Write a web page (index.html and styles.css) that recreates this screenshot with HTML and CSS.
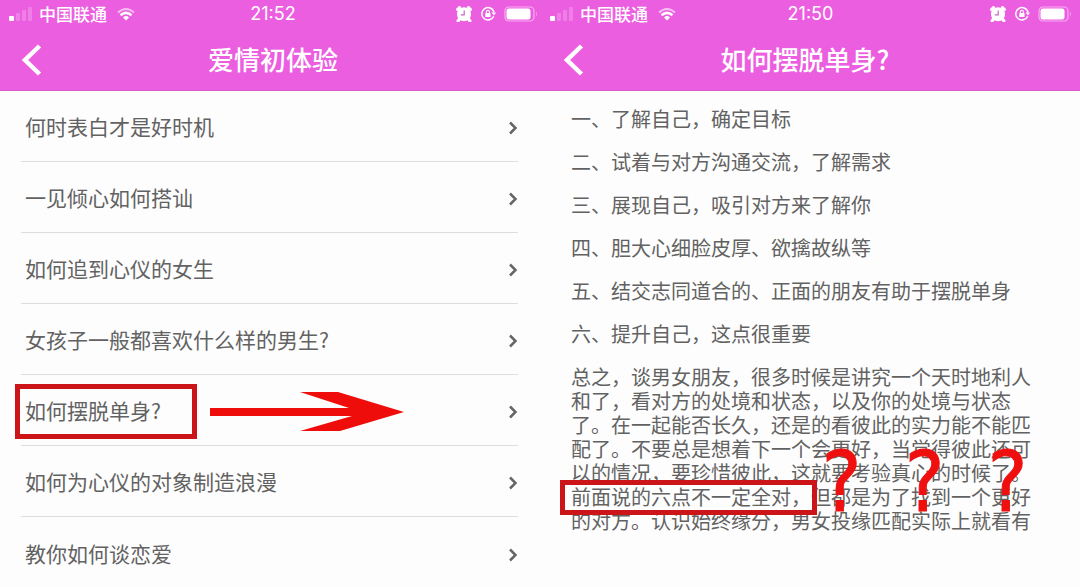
FILE: index.html
```html
<!DOCTYPE html>
<html lang="zh-CN">
<head>
<meta charset="utf-8">
<meta name="viewport" content="width=device-width, initial-scale=1">
<title>爱情初体验</title>
<link rel="stylesheet" href="styles.css">
</head>
<body>
<svg class="sprite" aria-hidden="true">
  <symbol id="signal" viewBox="0 0 26 16">
    <rect x="1" y="10" width="5" height="5" rx="1" fill="#fff"/>
    <g fill="#fff" opacity=".2"><rect x="8" y="7" width="4" height="8" rx="1"/><rect x="14" y="4" width="4" height="11" rx="1"/><rect x="20" y="1" width="4" height="14" rx="1"/></g>
  </symbol>
  <symbol id="wifi" viewBox="0 0 18 14">
    <path d="M1 5.500Q9-1.500 17 5.500" fill="none" stroke="#fff" stroke-width="2" opacity=".6"/>
    <path d="M3.500 8.200Q9 3.500 14.500 8.200" fill="none" stroke="#fff" stroke-width="2.500"/>
    <path d="M6 10.500Q9 7.600 12 10.500L9 13.500Z" fill="#fff"/>
  </symbol>
  <symbol id="alarm" viewBox="0 0 16 16">
    <path d="M1.500 3.500 3.500 1.500M12.500 1.500l2 2M3.500 13 2 15M12.500 13l1.500 2" stroke="#fff" stroke-width="3" stroke-linecap="round"/>
    <circle cx="8" cy="8.300" r="7" fill="#fff"/>
    <path d="M8.200 4.500v4.300H4.800" fill="none" stroke="#c963c2" stroke-width="1.200"/>
  </symbol>
  <symbol id="lock" viewBox="0 0 16 16">
    <path d="M13.700 10.200A6.200 6.200 0 1 1 14 6.300" fill="none" stroke="#fff" stroke-width="1.500"/>
    <path d="M11.500 6.500H16L14 9.500Z" fill="#fff"/>
    <rect x="5.300" y="7" width="5.200" height="4" rx=".5" fill="#fff"/>
    <path d="M6.400 7V5.900a1.500 1.500 0 0 1 3 0V7" fill="none" stroke="#fff" stroke-width="1.100"/>
  </symbol>
  <symbol id="battery" viewBox="0 0 34 16">
    <rect x="1" y="1" width="29" height="14" rx="4" fill="none" stroke="#fff" stroke-width="1.200" opacity=".5"/>
    <rect x="2.500" y="2.500" width="24" height="11" rx="2.500" fill="#fff"/>
    <path d="M32 5.500q2 2.500 0 5z" fill="#fff" opacity=".4"/>
  </symbol>
  <symbol id="back" viewBox="0 0 22 32"><path d="M19.500 2 5 16l14.500 14" fill="none" stroke="#fff" stroke-width="4.500"/></symbol>
  <symbol id="next" viewBox="0 0 10 14"><path d="M2 1.500 7.500 7 2 12.500" fill="none" stroke="#666" stroke-width="2.500"/></symbol>
</svg>
<main class="screens">
  <section class="screen screen-list">
    <header class="header">
      <div class="status">
        <div class="carrier"><svg class="i-signal"><use href="#signal"/></svg><span>中国联通</span><svg class="i-wifi"><use href="#wifi"/></svg></div>
        <time>21:52</time>
        <div class="indicators"><svg class="i-small"><use href="#alarm"/></svg><svg class="i-small"><use href="#lock"/></svg><svg class="i-battery"><use href="#battery"/></svg></div>
      </div>
      <div class="bar">
        <button class="back" type="button" aria-label="返回"><svg class="i-back"><use href="#back"/></svg></button>
        <h1>爱情初体验</h1>
      </div>
    </header>
    <nav class="topics">
      <a href="#"><span>何时表白才是好时机</span><svg class="i-next"><use href="#next"/></svg></a>
      <a href="#"><span>一见倾心如何搭讪</span><svg class="i-next"><use href="#next"/></svg></a>
      <a href="#"><span>如何追到心仪的女生</span><svg class="i-next"><use href="#next"/></svg></a>
      <a href="#"><span>女孩子一般都喜欢什么样的男生?</span><svg class="i-next"><use href="#next"/></svg></a>
      <a href="#"><span>如何摆脱单身?</span><svg class="i-next"><use href="#next"/></svg>
        <i class="frame frame-topic"></i>
        <svg class="arrow" viewBox="0 0 194 40"><path d="M0 16H139L90 0H128L194 20 130 39H90L142 24H0Z" fill="#ee0d0b"/></svg>
      </a>
      <a href="#"><span>如何为心仪的对象制造浪漫</span><svg class="i-next"><use href="#next"/></svg></a>
      <a href="#"><span>教你如何谈恋爱</span><svg class="i-next"><use href="#next"/></svg></a>
    </nav>
  </section>
  <section class="screen screen-article">
    <header class="header">
      <div class="status">
        <div class="carrier"><svg class="i-signal"><use href="#signal"/></svg><span>中国联通</span><svg class="i-wifi"><use href="#wifi"/></svg></div>
        <time>21:50</time>
        <div class="indicators"><svg class="i-small"><use href="#alarm"/></svg><svg class="i-small"><use href="#lock"/></svg><svg class="i-battery"><use href="#battery"/></svg></div>
      </div>
      <div class="bar">
        <button class="back" type="button" aria-label="返回"><svg class="i-back"><use href="#back"/></svg></button>
        <h1>如何摆脱单身?</h1>
      </div>
    </header>
    <article class="article">
      <p>一、了解自己，确定目标</p>
      <p>二、试着与对方沟通交流，了解需求</p>
      <p>三、展现自己，吸引对方来了解你</p>
      <p>四、胆大心细脸皮厚、欲擒故纵等</p>
      <p>五、结交志同道合的、正面的朋友有助于摆脱单身</p>
      <p>六、提升自己，这点很重要</p>
      <div class="summary">总之，谈男女朋友，很多时候是讲究一个天时地利人<br>和了，看对方的处境和状态，以及你的处境与状态<br>了。在一起能否长久，还是的看彼此的实力能不能匹<br>配了。不要总是想着下一个会更好，当觉得彼此还可<br>以的情况，要珍惜彼此，这就要考验真心的时候了。<br>前面说的六点不一定全对，但都是为了找到一个更好<br>的对方。认识始终缘分，男女投缘匹配实际上就看有
        <i class="frame frame-line"></i>
        <div class="doubts"><b>?</b><b>?</b><b>?</b></div>
      </div>
    </article>
  </section>
</main>
</body>
</html>
```

FILE: styles.css
```css
* { box-sizing: border-box; }

body {
  margin: 0;
  background: #fdfdfd;
  color: #626262;
  font-family: "Noto Sans CJK SC", sans-serif;
}

svg { display: block; flex: none; }
.sprite { position: absolute; width: 0; height: 0; }

.screens { display: flex; min-height: 100vh; overflow: hidden; }
.screen-list { flex: 546 1 0; }
.screen-article { flex: 534 1 0; }
.screen { min-width: 0; }

.header {
  background: #ec5ee0;
  color: #fff;
  height: 91px;
  border-bottom: 1px solid #d45bc9;
}

.status {
  display: grid;
  grid-template-columns: 1fr auto 1fr;
  align-items: center;
  height: 28px;
  padding: 0 8px;
  font-size: 17px;
  line-height: 28px;
}
.screen-article .status { padding: 0 8px 0 3px; }
.status time { font-family: Inter, sans-serif; font-size: 18px; }
.carrier, .indicators { display: flex; align-items: center; }
.carrier { gap: 10px; }
.carrier span { font-weight: 500; }
.indicators { justify-content: flex-end; gap: 8px; }
.i-signal { width: 26px; height: 16px; margin-right: -5px; }
.i-wifi { width: 18px; height: 14px; }
.i-small { width: 16px; height: 16px; }
.i-battery { width: 34px; height: 16px; }

.bar {
  display: grid;
  grid-template-columns: 60px 1fr 60px;
  align-items: center;
  height: 62px;
}
.screen-article .bar { padding-right: 16px; }
.bar h1 {
  margin: 0;
  text-align: center;
  font-size: 26px;
  line-height: 40px;
  font-weight: 500;
}
.back {
  display: flex;
  padding: 2px 0 0 20px;
  border: 0;
  background: none;
}
.screen-article .back { padding-left: 16px; }
.i-back { width: 22px; height: 32px; }

.topics { padding: 0 28px 0 21px; }
.topics a {
  position: relative;
  display: flex;
  align-items: center;
  justify-content: space-between;
  height: 71px;
  padding: 0 0 0 4px;
  border-bottom: 1px solid #dedede;
  color: inherit;
  font-size: 21px;
  line-height: 32px;
  text-decoration: none;
}
.topics a:last-child { border-bottom: 0; }
.i-next { width: 10px; height: 14px; margin-top: 4px; }

.frame { position: absolute; border: 5px solid #cb1518; }
.frame-topic { left: -6px; top: 9px; width: 182px; height: 55px; }
.arrow { position: absolute; left: 189px; top: 17px; width: 194px; height: 40px; }

.article { padding: 6px 16px 0 25px; font-size: 20px; white-space: nowrap; }
.article p { margin: 0; line-height: 43px; }
.summary { position: relative; padding-top: 10px; line-height: 24px; }
.frame-line { left: -11px; top: 125px; width: 257px; height: 35px; }
.doubts {
  position: absolute;
  left: 229px;
  top: 80px;
  display: grid;
  grid-template-columns: repeat(3, 83px);
  text-align: center;
  color: #f00f0f;
  font-family: "DejaVu Sans Condensed", "DejaVu Sans", sans-serif;
  font-size: 83px;
  line-height: 96px;
  -webkit-text-stroke: 1px #f00f0f;
}
.doubts b { font-weight: 400; }
```
